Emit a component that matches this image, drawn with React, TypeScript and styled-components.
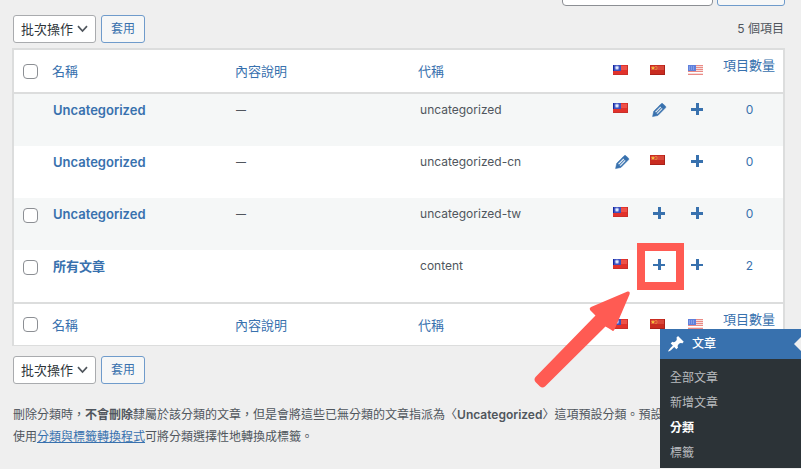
import React from 'react';
import styled, { createGlobalStyle, css } from 'styled-components';

const c = {
  page: '#efefef',
  line: '#dcdddd',
  stripe: '#f5f7f7',
  link: '#3871ae',
  text: '#50565d',
  dark: '#2c3337',
  red: '#ff5b53',
};

const GlobalStyle = createGlobalStyle`
  *, *::before, *::after { box-sizing: border-box; }
  body {
    margin: 0;
    background: ${c.page};
    color: ${c.text};
    font-family: Inter, "Noto Sans CJK TC", sans-serif;
    font-size: 13px;
    line-height: 16px;
    overflow: hidden;
  }
  button, input, select { font: inherit; }
`;

const Page = styled.div`
  position: relative;
  min-height: 100vh;
  overflow: hidden;
`;

const Content = styled.main`
  padding: 0 16px 0 12px;
`;

const SearchBar = styled.form`
  display: flex;
  justify-content: flex-end;
  align-items: flex-end;
  gap: 4px;
  height: 6px;
  overflow: hidden;
`;

const SearchInput = styled.input`
  flex: none;
  width: 151px;
  height: 28px;
  border: 1px solid #8c8f94;
  border-radius: 4px;
  background: #fff;
`;

const Button = styled.button<{ $wide?: boolean }>`
  flex: none;
  width: ${(p) => (p.$wide ? '68px' : '44px')};
  height: 28px;
  padding: 0;
  border: 1px solid #6f9bcb;
  border-radius: 3px;
  background: #f6f7f7;
  color: ${c.link};
  font-size: 12px;
`;

const Toolbar = styled.div`
  display: flex;
  align-items: center;
  gap: 5px;
  padding: 9px 0 5px 1px;
`;

const BottomToolbar = styled(Toolbar)`
  padding-top: 10px;
`;

const ItemCount = styled.span`
  margin-left: auto;
  padding-right: 1px;
  font-size: 12px;
`;

const SelectBox = styled.span`
  display: inline-grid;
  align-items: center;
  width: 83px;
  height: 28px;

  & > * { grid-area: 1 / 1; }
  svg { justify-self: end; margin-right: 8px; pointer-events: none; }
`;

const Select = styled.select`
  appearance: none;
  width: 100%;
  height: 100%;
  padding: 0 0 0 7px;
  border: 1px solid #a9abae;
  border-radius: 3px;
  background: #fff;
  color: ${c.dark};
`;

const Table = styled.table`
  width: 100%;
  table-layout: fixed;
  border-collapse: separate;
  border-spacing: 0;
  border: 2px solid ${c.line};
  border-bottom-width: 1px;
  background: #fff;
`;

const Col = styled.col<{ $width?: string }>`
  width: ${(p) => p.$width ?? 'auto'};
`;

const HeadCell = styled.th<{ $foot?: boolean; $top?: boolean; $icon?: boolean }>`
  height: ${(p) => (p.$foot ? '43px' : '44px')};
  padding: 0 0 0 ${(p) => (p.$icon ? '9px' : '8px')};
  ${(p) => (p.$foot ? 'border-top' : 'border-bottom')}: 2px solid ${c.line};
  text-align: left;
  vertical-align: middle;
  ${(p) => p.$top && css`padding-top: 7px; vertical-align: top;`}
  font-weight: 400;
  white-space: nowrap;
`;

const BodyRow = styled.tr<{ $striped: boolean }>`
  background: ${(p) => (p.$striped ? c.stripe : '#fff')};
`;

const BodyCell = styled.td<{ $slug?: boolean; $center?: boolean; $dash?: boolean }>`
  height: 52px;
  padding: 8px 0 0 9px;
  vertical-align: top;
  ${(p) => p.$slug && css`padding-left: 10px; font-size: 12px;`}
  ${(p) => p.$dash && css`font-size: 10px; font-weight: 600;`}
  ${(p) => p.$center && css`padding-left: 1px; font-size: 12px; text-align: center;`}
`;

const IconCell = styled.td`
  padding: 6px 0 0 9px;
  vertical-align: top;
`;

const CheckCell = styled.td`
  padding: 10px 0 0 9px;
  vertical-align: top;
`;

const Checkbox = styled.input.attrs({ type: 'checkbox' })`
  appearance: none;
  display: block;
  width: 15px;
  height: 15px;
  margin: 0;
  border: 1px solid #8c8f94;
  border-radius: 4px;
  background: #fff;
`;

const Link = styled.a<{ $underline?: boolean; $strong?: boolean }>`
  color: ${c.link};
  font-weight: ${(p) => (p.$strong ? 600 : 'inherit')};
  text-decoration: ${(p) => (p.$underline ? 'underline' : 'none')};
`;

const IconSvg = styled.svg`
  display: block;
  width: 18px;
  height: 18px;
`;

const Notes = styled.p`
  margin: 15px 0 0;
  padding-left: 1px;
  font-size: 12px;
  line-height: 22px;
  white-space: nowrap;

  strong { font-weight: 600; }
`;

const Highlight = styled.div`
  position: absolute;
  top: 243px;
  right: 117px;
  width: 47px;
  height: 47px;
  border: 8px solid ${c.red};
  pointer-events: none;
`;

const Arrow = styled.svg`
  position: absolute;
  top: 288px;
  right: 168px;
  width: 101px;
  height: 103px;
  pointer-events: none;
`;

const Menu = styled.nav`
  position: absolute;
  top: 329px;
  right: 0;
  width: 141px;
  background: ${c.dark};
  font-size: 12px;
`;

const MenuTitle = styled.a`
  display: flex;
  align-items: center;
  gap: 7px;
  height: 30px;
  padding-left: 7px;
  background: ${c.link};
  color: #fff;
  font-weight: 500;
  text-decoration: none;
`;

const MenuPointer = styled.svg`
  width: 7px;
  height: 14px;
  margin-left: auto;
`;

const MenuList = styled.ul`
  margin: 0;
  padding: 6px 0 3px;
  list-style: none;
`;

const MenuLink = styled.a<{ $current?: boolean }>`
  display: block;
  padding-left: 10px;
  color: ${(p) => (p.$current ? '#fff' : '#b9bcbf')};
  font-weight: ${(p) => (p.$current ? 700 : 400)};
  line-height: 25px;
  text-decoration: none;
`;

type Kind = 'tw' | 'cn' | 'us' | 'edit' | 'plus' | 'plusThin';

const labels: Record<Kind, string> = {
  tw: '中文 (台灣)', cn: '中文 (中国)', us: 'English', edit: '編輯', plus: '新增', plusThin: '新增',
};

function Glyph({ kind }: { kind: Kind }) {
  return (
    <IconSvg viewBox="0 0 18 18" role="img" aria-label={labels[kind]}>
      {kind === 'tw' && (
        <>
          <rect y="3" width="15" height="10" fill="#e2322b" />
          <rect x="1" y="4" width="13" height="4" fill="#ee5148" />
          <rect y="3" width="8" height="6" fill="#3d50bd" />
          <rect y="3" width="1" height="6" fill="#1426a0" />
          <circle cx="4" cy="5.7" r="2.2" fill="#8d9fe2" />
          <circle cx="4" cy="5.7" r="1.3" fill="#e6ebfb" />
          <path d="M0 12.5h15M14.5 3v10" stroke="#c9302a" />
        </>
      )}
      {kind === 'cn' && (
        <>
          <rect y="3" width="15" height="10" fill="#c92c20" />
          <rect x="1" y="4" width="13" height="4" fill="#d8473a" />
          <path d="M3 4l.6 1.2 1.4.1-1 1 .3 1.5L3 7.1l-1.3.7.3-1.5-1-1 1.4-.1z" fill="#f6c33c" />
          <path d="M5.5 4h1v1h-1zM6.5 5.5h1v1h-1zM5.5 7h1v1h-1z" fill="#eeb03a" />
          <path d="M0 12.5h15M14.5 3v10" stroke="#a92119" />
        </>
      )}
      {kind === 'us' && (
        <>
          <rect y="3" width="15" height="10" fill="#f6dddb" />
          <path d="M0 3.5h15M0 5.5h15M0 7.5h15M0 9.5h15M0 12.5h15" stroke="#ea8a85" />
          <path d="M0 10.5h15" stroke="#fff" />
          <rect y="3" width="8" height="6" fill="#5f80dc" />
          <path d="M1 5h6M1 7h6" stroke="#a9bcf0" strokeDasharray="1 1" />
        </>
      )}
      {kind === 'edit' && (
        <path
          transform="translate(-.3 .5) scale(.95)"
          fill={c.link}
          stroke={c.link}
          strokeWidth=".6"
          d="M13.89 3.39l2.71 2.72c.46.46.42 1.24.03 1.64l-8.01 8.02-5.56 1.16 1.16-5.58s7.6-7.63 7.99-8.03c.39-.39 1.22-.39 1.68.07zm-2.73 2.79l-5.59 5.61 1.11 1.11 5.54-5.65zm-2.97 8.23l5.58-5.6-1.07-1.08-5.59 5.6z"
        />
      )}
      {kind === 'plus' && <path fill={c.link} d="M8 3h3v5h4v3h-4v4H8v-4H3V8h5z" />}
      {kind === 'plusThin' && <path fill={c.link} d="M8 3h3v5h4v2h-4v4H8v-4H3V8h5z" />}
    </IconSvg>
  );
}

function BulkSelect({ id }: { id: string }) {
  return (
    <SelectBox>
      <Select id={id} aria-label="批次操作" defaultValue="bulk">
        <option value="bulk">批次操作</option>
      </Select>
      <svg width="11" height="8" viewBox="0 0 11 8" aria-hidden="true">
        <path d="M1 1.2l4.5 4.8L10 1.2" fill="none" stroke="#50565d" strokeWidth="1.7" />
      </svg>
    </SelectBox>
  );
}

function Headings({ foot }: { foot?: boolean }) {
  return (
    <tr>
      <HeadCell $foot={foot} $icon><Checkbox aria-label="全部選取" /></HeadCell>
      {['名稱', '內容說明', '代稱'].map((t) => (
        <HeadCell key={t} $foot={foot} scope="col"><Link href="#sort">{t}</Link></HeadCell>
      ))}
      {(['tw', 'cn', 'us'] as Kind[]).map((k) => (
        <HeadCell key={k} $foot={foot} $icon scope="col"><Glyph kind={k} /></HeadCell>
      ))}
      <HeadCell $foot={foot} $top scope="col"><Link href="#count">項目數量</Link></HeadCell>
    </tr>
  );
}

type Row = { name: string; desc: string; slug: string; icons: Kind[]; count: number; selectable: boolean };

const rows: Row[] = [
  { name: 'Uncategorized', desc: '—', slug: 'uncategorized', icons: ['tw', 'edit', 'plus'], count: 0, selectable: false },
  { name: 'Uncategorized', desc: '—', slug: 'uncategorized-cn', icons: ['edit', 'cn', 'plus'], count: 0, selectable: false },
  { name: 'Uncategorized', desc: '—', slug: 'uncategorized-tw', icons: ['tw', 'plus', 'plus'], count: 0, selectable: true },
  { name: '所有文章', desc: '', slug: 'content', icons: ['tw', 'plusThin', 'plusThin'], count: 2, selectable: true },
];

const menuItems = ['全部文章', '新增文章', '分類', '標籤'];

export default function App() {
  return (
    <Page>
      <GlobalStyle />
      <Content>
        <SearchBar>
          <SearchInput type="search" aria-label="搜尋分類" />
          <Button type="button" $wide aria-label="搜尋分類" />
        </SearchBar>
        <Toolbar>
          <BulkSelect id="bulk-top" />
          <Button type="button">套用</Button>
          <ItemCount>5 個項目</ItemCount>
        </Toolbar>
        <Table>
          <colgroup>
            <Col $width="30px" />
            <Col $width="23.8%" />
            <Col $width="23.8%" />
            <Col />
            <Col $width="37px" />
            <Col $width="38px" />
            <Col $width="36px" />
            <Col $width="68px" />
          </colgroup>
          <thead><Headings /></thead>
          <tbody>
            {rows.map((r, i) => (
              <BodyRow key={r.slug} $striped={i % 2 === 0}>
                <CheckCell>{r.selectable && <Checkbox aria-label={`選取 ${r.name}`} />}</CheckCell>
                <BodyCell><Link href="#edit" $strong>{r.name}</Link></BodyCell>
                <BodyCell $dash>{r.desc}</BodyCell>
                <BodyCell $slug>{r.slug}</BodyCell>
                {r.icons.map((k, n) => (
                  <IconCell key={n}>
                    {k === 'tw' || k === 'cn' ? <Glyph kind={k} /> : <Link href="#translate"><Glyph kind={k} /></Link>}
                  </IconCell>
                ))}
                <BodyCell $center><Link href="#posts">{r.count}</Link></BodyCell>
              </BodyRow>
            ))}
          </tbody>
          <tfoot><Headings foot /></tfoot>
        </Table>
        <BottomToolbar>
          <BulkSelect id="bulk-bottom" />
          <Button type="button">套用</Button>
        </BottomToolbar>
        <Notes>
          刪除分類時，<strong>不會刪除</strong>隸屬於該分類的文章，但是會將這些已無分類的文章指派為〈<strong>Uncategorized</strong>〉這項預設分類。預設分
          <br />
          使用<Link href="#convert" $underline>分類與標籤轉換程式</Link>可將分類選擇性地轉換成標籤。
        </Notes>
      </Content>
      <Highlight />
      <Arrow viewBox="0 0 101 103" aria-hidden="true">
        <path
          d="M95.5 3.5Q98.5 3 97.5 6.5L82.5 41.5Q81.5 44 79.5 42L73.5 38.5L13 98.5Q10.5 100.5 8 98.5L3.5 94Q1.5 91.5 3.5 89L63.5 27.5L58 22Q57 20 59 19Z"
          fill={c.red}
        />
      </Arrow>
      <Menu aria-label="文章">
        <MenuTitle href="#posts">
          <IconSvg viewBox="0 0 20 20" aria-hidden="true">
            <path
              fill="#fff"
              d="M10.44 3.02l1.82-1.82 6.36 6.35-1.83 1.82c-1.05-.68-2.48-.57-3.41.36l-.75.75c-.92.93-1.04 2.35-.35 3.41l-1.83 1.82-2.41-2.41-2.8 2.79c-.42.42-3.38 2.71-3.8 2.29s1.86-3.39 2.28-3.81l2.79-2.79L4.1 9.36l1.83-1.82c1.05.69 2.48.57 3.4-.36l.75-.75c.93-.92 1.05-2.35.36-3.41z"
            />
          </IconSvg>
          文章
          <MenuPointer viewBox="0 0 7 14" aria-hidden="true"><path d="M7 0L0 7l7 7z" fill={c.page} /></MenuPointer>
        </MenuTitle>
        <MenuList>
          {menuItems.map((t) => (
            <li key={t}>
              <MenuLink href="#menu" $current={t === '分類'} aria-current={t === '分類' ? 'page' : undefined}>{t}</MenuLink>
            </li>
          ))}
        </MenuList>
      </Menu>
    </Page>
  );
}
